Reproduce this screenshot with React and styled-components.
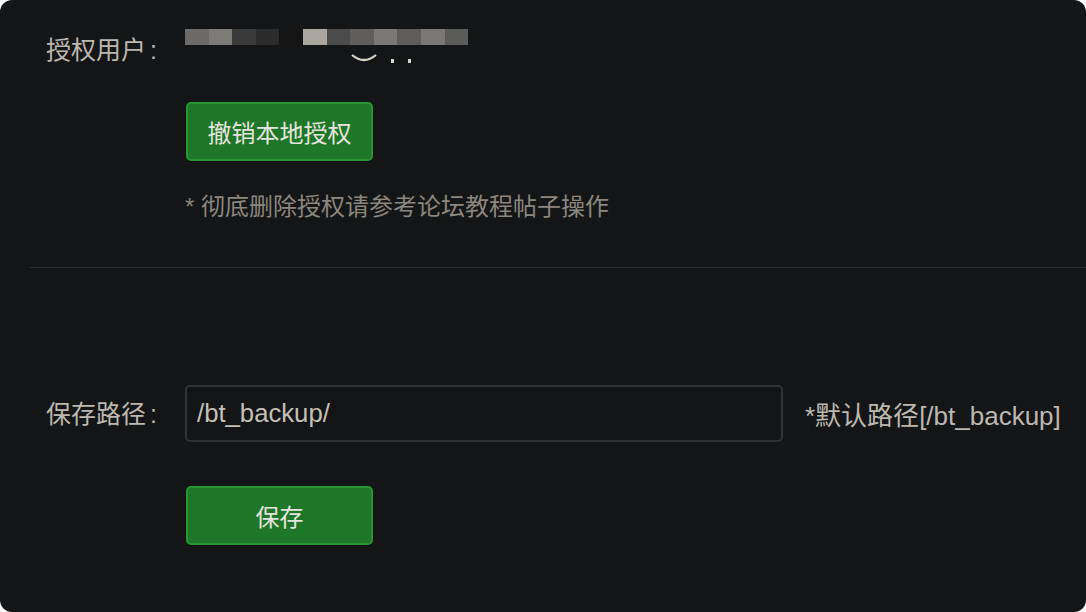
import React from "react";
import styled, { createGlobalStyle } from "styled-components";

const Global = createGlobalStyle`
  html, body { margin: 0; padding: 0; background: #ffffff; }
  #root { width: 1086px; height: 612px; }
  * { box-sizing: border-box; }
`;

const Panel = styled.div`
  width: 1086px;
  height: 612px;
  background: #141517;
  border-radius: 12px;
  overflow: hidden;
  font-family: "Liberation Sans", "Noto Sans CJK SC", sans-serif;
  color: #b9b5ad;
  font-size: 24px;
  display: flex;
  flex-direction: column;
`;

const Section = styled.div`
  display: flex;
  flex-direction: column;
  padding: ${(p) => p.$pad};
`;

const Row = styled.div`
  display: flex;
  align-items: ${(p) => p.$align || "center"};
  margin-top: ${(p) => p.$mt || 0}px;
`;

const Label = styled.div`
  width: 139px;
  flex: none;
  font-size: 25px;
  line-height: ${(p) => p.$lh || 40}px;
  white-space: nowrap;
  color: #bcb8b0;
`;

const Colon = styled.span`
  margin-left: 4px;
`;

const Field = styled.div`
  display: flex;
  flex-direction: column;
`;

const Pixelated = styled.div`
  display: flex;
  height: 16px;
  margin-top: -1px;
`;

const Pixel = styled.span`
  width: 23.6px;
  height: 16px;
  background: ${(p) => p.$c};
`;

const Remnant = styled.svg`
  display: block;
  margin-left: 166px;
  margin-top: 8px;
`;

const Button = styled.button`
  width: 187px;
  height: 59px;
  margin-left: 1px;
  background: #1e7628;
  border: 2px solid #28962f;
  border-radius: 5px;
  color: #e6e4de;
  font-family: "Liberation Sans", "Noto Sans CJK SC", sans-serif;
  font-size: 24px;
  padding: 0;
  cursor: pointer;
`;

const Note = styled.div`
  line-height: 30px;
  font-size: 24px;
  color: #8b867e;
  white-space: nowrap;
`;

const Divider = styled.div`
  height: 1px;
  margin-left: 30px;
  background: #2c2d30;
`;

const Input = styled.input`
  width: 598px;
  height: 57px;
  background: #131416;
  border: 2px solid #303335;
  border-radius: 5px;
  color: #c4c0b8;
  font-family: "Liberation Sans", "Noto Sans CJK SC", sans-serif;
  font-size: 25.7px;
  padding: 0 10px;
  outline: none;
`;

const Hint = styled.div`
  margin-left: 22px;
  white-space: nowrap;
  font-size: 26px;
  color: #bcb8b0;
`;

const Latin = styled.span`
  font-size: 26px;
`;

const Indent = styled.div`
  padding-left: 139px;
`;

const pixels = [
  "#6b6a68", "#7d7b77", "#3a3a3a", "#2b2b2c", "#141415", "#aba7a0",
  "#4b4b4b", "#5f5e5b", "#7b7975", "#5e5d5b", "#7a7874", "#5b5b5a",
];

export default function App() {
  return (
    <>
      <Global />
      <Panel>
        <Section $pad="30px 0 0 46px">
          <Row $align="flex-start">
            <Label $lh={40}>
              授权用户<Colon>:</Colon>
            </Label>
            <Field>
              <Pixelated>
                {pixels.map((c, i) => (
                  <Pixel key={i} $c={c} />
                ))}
              </Pixelated>
              <Remnant width="60" height="12" viewBox="0 0 60 12">
                <path d="M1 2 Q13 12 25 2" stroke="#d8d4cc" strokeWidth="2.2" fill="none" />
                <rect x="40" y="6" width="3" height="4" fill="#d8d4cc" />
                <rect x="57" y="6" width="3" height="4" fill="#d8d4cc" />
              </Remnant>
            </Field>
          </Row>
          <Indent>
            <Row $mt={32}>
              <Button>撤销本地授权</Button>
            </Row>
            <Row $mt={31}>
              <Note>* 彻底删除授权请参考论坛教程帖子操作</Note>
            </Row>
          </Indent>
        </Section>
        <Section $pad="45px 0 0 0">
          <Divider />
        </Section>
        <Section $pad="117px 0 0 46px">
          <Row>
            <Label>
              保存路径<Colon>:</Colon>
            </Label>
            <Input defaultValue="/bt_backup/" />
            <Hint>
              *默认路径<Latin>[/bt_backup]</Latin>
            </Hint>
          </Row>
          <Indent>
            <Row $mt={44}>
              <Button>保存</Button>
            </Row>
          </Indent>
        </Section>
      </Panel>
    </>
  );
}
